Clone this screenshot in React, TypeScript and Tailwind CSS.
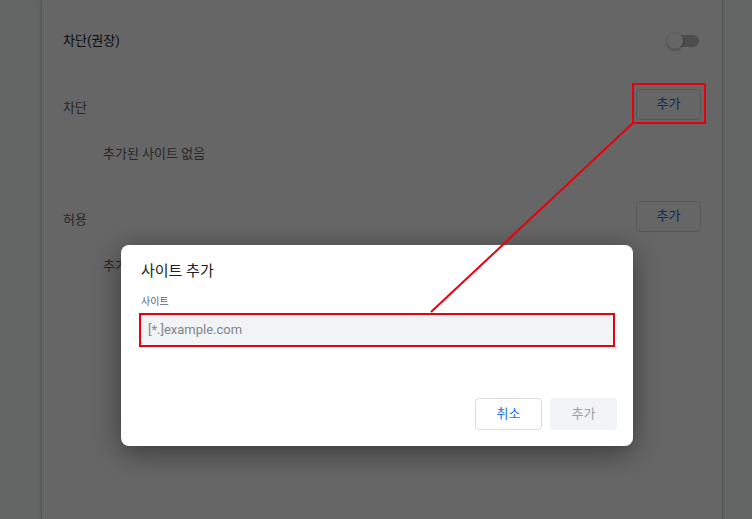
export default function App() {
  return (
    <div className="relative h-[519px] w-[752px] overflow-hidden bg-[#f8f9fa] font-[Roboto,'Noto_Sans_CJK_KR',sans-serif] text-[13px]">
      {/* underlying settings card */}
      <div className="ml-[42px] flex h-full w-[680px] flex-col bg-white px-[21px] pt-[17px] shadow-[0_0_0_1px_rgba(0,0,0,0.1),0_1px_3px_rgba(60,64,67,0.3)]">
        <div className="flex h-12 items-center justify-between text-[#202124]">
          <span>차단(권장)</span>
          <div className="relative mr-[2px] h-4 w-[32px]">
            <div className="absolute right-0 top-[2px] h-[12px] w-[28px] rounded-full bg-[#bdc1c6]" />
            <div className="absolute left-0 top-0 h-4 w-4 rounded-full bg-white shadow-[0_1px_3px_rgba(0,0,0,0.4)]" />
          </div>
        </div>
        <div className="mt-[15px] flex h-12 items-center justify-between text-[#5f6368]">
          <span className="pt-[8px]">차단</span>
          <button className="h-[31px] w-[65px] rounded-[4px] border border-[#dadce0] bg-white text-[13px] text-[#1a73e8]">
            추가
          </button>
        </div>
        <div className="flex h-12 items-center pl-[40px] text-[#5f6368]">
          <span className="pt-[4px]">추가된 사이트 없음</span>
        </div>
        <div className="mt-4 flex h-12 items-center justify-between text-[#5f6368]">
          <span className="pt-[8px]">허용</span>
          <button className="h-[31px] w-[65px] rounded-[4px] border border-[#dadce0] bg-white text-[13px] text-[#1a73e8]">
            추가
          </button>
        </div>
        <div className="flex h-12 items-center pl-[40px] text-[#5f6368]">
          <span className="pt-[4px]">추가된 사이트 없음</span>
        </div>
      </div>

      {/* scrim */}
      <div className="absolute inset-0 bg-black/60" />

      {/* dialog */}
      <div className="absolute left-[121px] top-[245px] flex h-[201px] w-[512px] flex-col rounded-[8px] bg-white shadow-[0_6px_28px_rgba(0,0,0,0.45)]">
        <div className="px-5 pt-[15px] text-[15px] leading-[22px] text-[#202124]">사이트 추가</div>
        <div className="mt-[13px] px-5 text-[10px] leading-[14px] text-[#5f6368]">사이트</div>
        <div className="mt-[5px] px-5">
          <div className="flex h-[31px] items-center rounded-[4px] bg-[#f1f3f4] px-[7px] text-[13px] text-[#80868b]">
            [*.]example.com
          </div>
        </div>
        <div className="mt-auto flex justify-end gap-2 pb-4 pr-4">
          <button className="h-[32px] w-[67px] rounded-[4px] border border-[#dadce0] bg-white text-[13px] text-[#1a73e8]">
            취소
          </button>
          <button className="h-[32px] w-[67px] rounded-[4px] bg-[#f1f3f4] text-[13px] text-[#9aa0a6]">
            추가
          </button>
        </div>
      </div>

      {/* annotations */}
      <div className="absolute left-[632px] top-[83px] h-[41px] w-[74px] border-2 border-[#e8000f]" />
      <div className="absolute left-[139px] top-[313px] h-[34px] w-[476px] border-2 border-[#e8000f]" />
      <svg className="absolute left-0 top-0" width="752" height="519" viewBox="0 0 752 519">
        <line x1="633" y1="123" x2="431" y2="312" stroke="#e8000f" strokeWidth="2" />
      </svg>
    </div>
  );
}
